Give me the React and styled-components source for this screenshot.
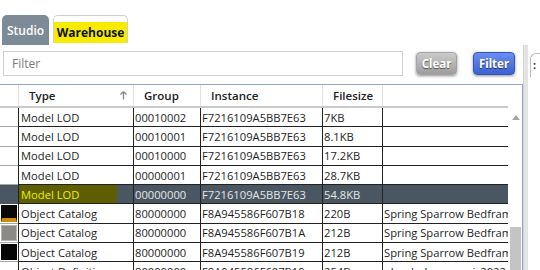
import React from 'react';
import styled, { createGlobalStyle, css } from 'styled-components';

const GlobalStyle = createGlobalStyle`
  html, body {
    margin: 0;
    padding: 0;
    background: #fff;
  }
  * { box-sizing: border-box; }
`;

const Page = styled.div`
  width: 540px;
  height: 270px;
  overflow: hidden;
  display: flex;
  flex-direction: column;
  font-family: "Open Sans", "Noto Sans", sans-serif;
  color: #1e1e1e;
`;

const TabBar = styled.div`
  height: 45px;
  flex-shrink: 0;
  display: flex;
  align-items: flex-start;
  gap: 4px;
  padding: 15px 0 0 2px;
`;

const Tab = styled.div`
  height: 30px;
  border-radius: 5px 5px 0 0;
  display: flex;
  font-size: 12px;
  ${(p) => (p.active
    ? css`
      width: 75px;
      height: 28px;
      border: 1px solid #cdcdcd;
      border-bottom: none;
      padding-top: 6px;
      background: #fff;
    `
    : css`
      width: 47px;
      background: #7d8a98;
      color: #fff;
      align-items: center;
      justify-content: center;
      font-weight: 600;
    `)}
`;

const TabLabel = styled.span`
  flex: 1;
  background: #f7ec00;
  color: #111;
  font-weight: 700;
  display: flex;
  align-items: center;
  justify-content: center;
  font-size: 12px;
`;

const Body = styled.div`
  flex: 1;
  display: flex;
  min-height: 0;
`;

const LeftPane = styled.div`
  width: 523px;
  display: flex;
  flex-direction: column;
`;

const Splitter = styled.div`
  width: 5px;
  background: #e4e4e4;
  border-left: 1px solid #d4d4d4;
`;

const RightPane = styled.div`
  flex: 1;
  padding: 8px 0 0 2px;
`;

const SideTab = styled.div`
  height: 24px;
  border: 1px solid #bcbcbc;
  border-right: none;
  border-bottom: none;
  border-radius: 6px 0 0 0;
  padding: 3px 0 0 2px;
  font-size: 11px;
  font-weight: 700;
  color: #333;
`;

const Toolbar = styled.div`
  height: 39px;
  flex-shrink: 0;
  display: flex;
  align-items: flex-start;
  padding: 6px 0 0 3px;
`;

const FilterInput = styled.input`
  width: 400px;
  height: 25px;
  border: 1px solid #cfcfcf;
  padding: 0 8px;
  font-family: "Open Sans", sans-serif;
  font-size: 12px;
  color: #333;
  outline: none;
  &::placeholder { color: #7a7a7a; }
`;

const Button = styled.button`
  height: 23px;
  margin-top: 1px;
  border-radius: 4px;
  font-family: "Noto Sans", sans-serif;
  font-weight: 700;
  font-size: 11.5px;
  color: #fff;
  padding: 0;
  text-shadow: 0 1px 1px rgba(0, 0, 0, 0.55);
  box-shadow: 0 1px 3px rgba(0, 0, 0, 0.45);
  ${(p) => (p.primary
    ? css`
      width: 42px;
      margin-left: 16px;
      background: linear-gradient(#6a8ef0, #3c62cf);
      border: 1px solid #3556b9;
    `
    : css`
      width: 41px;
      margin-left: 13px;
      background: linear-gradient(#cbcbcb, #9d9d9d);
      border: 1px solid #a4a4a4;
    `)}
`;

const Table = styled.div`
  flex: 1;
  display: flex;
  border-top: 1px solid #8fa4c7;
  border-right: 1px solid #8fa4c7;
  min-height: 0;
  overflow: hidden;
`;

const Grid = styled.div`
  width: 508px;
  display: flex;
  flex-direction: column;
`;

const COLS = '18px 115px 67px 122px 60px 126px';

const HeaderRow = styled.div`
  display: grid;
  grid-template-columns: ${COLS};
  height: 23px;
  flex-shrink: 0;
  border-bottom: 2px solid #cacaca;
`;

const HeaderCell = styled.div`
  display: flex;
  align-items: center;
  justify-content: space-between;
  padding: 0 6px 0 10px;
  font-size: 11.5px;
  font-weight: 600;
  color: #222;
  border-left: ${(p) => (p.first ? 'none' : '1px solid #e2e2e2')};
`;

const Row = styled.div`
  display: grid;
  grid-template-columns: ${COLS};
  height: 19.3px;
  flex-shrink: 0;
  ${(p) => p.selected && css`
    background: #4b5663;
    color: #e6e6e6;
  `}
`;

const Cell = styled.div`
  display: flex;
  align-items: center;
  padding-left: 1px;
  font-size: 11.2px;
  white-space: nowrap;
  overflow: hidden;
  border-left: 1px solid #222;
  border-bottom: 1px solid #222;
`;

const IconCell = styled.div`
  display: flex;
  align-items: stretch;
  padding: 1px;
  border-bottom: 1px solid ${(p) => (p.selected ? '#4b5663' : '#a8a8a8')};
`;

const Swatch = styled.div`
  flex: 1;
  background: ${(p) => p.color};
  border: 1px solid ${(p) => p.edge || p.color};
  border-bottom: ${(p) => (p.stripe ? `4px solid ${p.stripe}` : `1px solid ${p.edge || p.color}`)};
`;

const TypeMark = styled.span`
  display: flex;
  align-items: center;
  height: 100%;
  padding-left: 2px;
  ${(p) => p.selected && css`
    width: 98px;
    background: #5e5e00;
    color: #f0f000;
  `}
`;

const ScrollBar = styled.div`
  width: 13px;
  display: flex;
  flex-direction: column;
  align-items: flex-end;
`;

const ArrowUp = styled.div`
  margin-top: 30px;
  margin-right: 1px;
  width: 0;
  height: 0;
  border-left: 4px solid transparent;
  border-right: 4px solid transparent;
  border-bottom: 5px solid #a6a6a6;
`;

const Thumb = styled.div`
  margin-top: 107px;
  width: 11px;
  height: 60px;
  flex-shrink: 0;
  background: #c4c4c4;
`;

const SortArrow = () => (
  <svg width="7" height="9" viewBox="0 0 7 9">
    <path d="M3.5 0.5 L0.5 3.5 M3.5 0.5 L6.5 3.5 M3.5 0.5 V8.5" stroke="#8a8a8a" strokeWidth="1.3" fill="none" />
  </svg>
);

const ROWS = [
  { type: 'Model LOD', group: '00010002', inst: 'F7216109A5BB7E63', size: '7KB', name: '' },
  { type: 'Model LOD', group: '00010001', inst: 'F7216109A5BB7E63', size: '8.1KB', name: '' },
  { type: 'Model LOD', group: '00010000', inst: 'F7216109A5BB7E63', size: '17.2KB', name: '' },
  { type: 'Model LOD', group: '00000001', inst: 'F7216109A5BB7E63', size: '28.7KB', name: '' },
  { type: 'Model LOD', group: '00000000', inst: 'F7216109A5BB7E63', size: '54.8KB', name: '', selected: true },
  { type: 'Object Catalog', group: '80000000', inst: 'F8A945586F607B18', size: '220B', name: 'Spring Sparrow Bedframe', swatch: { color: '#080808', stripe: '#d58a0c' } },
  { type: 'Object Catalog', group: '80000000', inst: 'F8A945586F607B1A', size: '212B', name: 'Spring Sparrow Bedframe', swatch: { color: '#8c8a87', edge: '#b4b4b4' } },
  { type: 'Object Catalog', group: '80000000', inst: 'F8A945586F607B19', size: '212B', name: 'Spring Sparrow Bedframe', swatch: { color: '#050505' } },
  { type: 'Object Definition', group: '80000000', inst: 'F8A945586F607B19', size: '254B', name: 'plumbobpaperzzi_2022' },
];

export default function App() {
  return (
    <Page>
      <GlobalStyle />
      <TabBar>
        <Tab>Studio</Tab>
        <Tab active><TabLabel>Warehouse</TabLabel></Tab>
      </TabBar>
      <Body>
        <LeftPane>
          <Toolbar>
            <FilterInput placeholder="Filter" />
            <Button>Clear</Button>
            <Button primary>Filter</Button>
          </Toolbar>
          <Table>
            <Grid>
              <HeaderRow>
                <HeaderCell first />
                <HeaderCell>Type<SortArrow /></HeaderCell>
                <HeaderCell>Group</HeaderCell>
                <HeaderCell>Instance</HeaderCell>
                <HeaderCell>Filesize</HeaderCell>
                <HeaderCell />
              </HeaderRow>
              {ROWS.map((r, i) => (
                <Row key={i} selected={r.selected}>
                  <IconCell selected={r.selected}>
                    {r.swatch && <Swatch {...r.swatch} />}
                  </IconCell>
                  <Cell style={{ paddingLeft: 0 }}>
                    <TypeMark selected={r.selected}>{r.type}</TypeMark>
                  </Cell>
                  <Cell>{r.group}</Cell>
                  <Cell>{r.inst}</Cell>
                  <Cell>{r.size}</Cell>
                  <Cell>{r.name}</Cell>
                </Row>
              ))}
            </Grid>
            <ScrollBar>
              <ArrowUp />
              <Thumb />
            </ScrollBar>
          </Table>
        </LeftPane>
        <Splitter />
        <RightPane>
          <SideTab>:</SideTab>
        </RightPane>
      </Body>
    </Page>
  );
}
